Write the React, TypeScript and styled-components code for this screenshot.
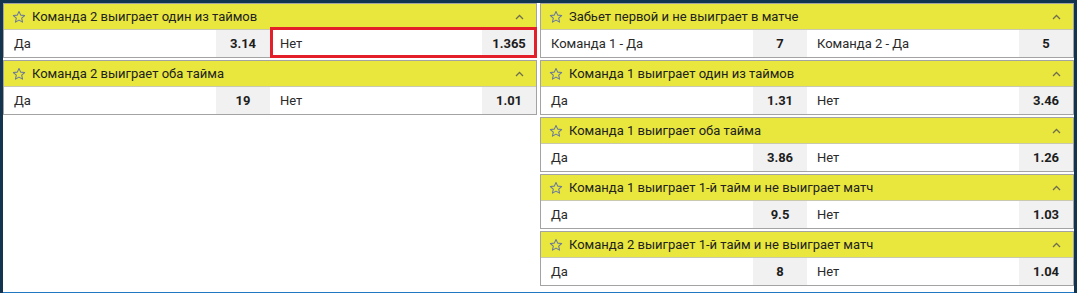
import React from "react";
import styled, { createGlobalStyle } from "styled-components";

const GlobalStyle = createGlobalStyle`
  html, body {
    margin: 0;
    padding: 0;
    background: #12344f;
    font-family: Roboto, "Noto Sans", Arial, sans-serif;
  }
  * { box-sizing: border-box; }
`;

const Frame = styled.div`
  margin: 3px 3px 0 3px;
  height: 290px;
  background: #fff;
  border-bottom: 1px solid #1f78c1;
  display: grid;
  grid-template-columns: 534px 534px;
  column-gap: 3px;
  align-items: start;
`;

const Column = styled.div`
  display: flex;
  flex-direction: column;
  gap: 2px;
`;

const Block = styled.div`
  border: 1px solid #a3a3a3;
  background: #fff;
`;

const Head = styled.div`
  height: 26px;
  background: #e9e73d;
  border-bottom: 1px solid #c9c9b0;
  display: flex;
  align-items: center;
  padding: 0 12px 0 8px;
  gap: 6px;
  font-size: 13px;
  color: #222;
`;

const Title = styled.span`
  flex: 1;
  white-space: nowrap;
`;

const Row = styled.div`
  height: 27px;
  display: grid;
  grid-template-columns: 1fr 1fr;
`;

const Outcome = styled.div<{ $selected?: boolean }>`
  position: relative;
  display: flex;
  align-items: stretch;
  font-size: 13px;
  color: #2a2a2a;
  &::after {
    content: "";
    display: ${(p) => (p.$selected ? "block" : "none")};
    position: absolute;
    left: 0;
    right: -1px;
    top: -3px;
    bottom: -1px;
    border: 3px solid #e3202a;
  }
`;

const Label = styled.span`
  flex: 1;
  display: flex;
  align-items: center;
  padding-left: 10px;
  white-space: nowrap;
`;

const Odds = styled.span`
  width: 54px;
  background: #f1f1f1;
  display: flex;
  align-items: center;
  justify-content: center;
  font-weight: 700;
  font-size: 13px;
  color: #1d1d1d;
`;

const Star = () => (
  <svg width="14" height="14" viewBox="0 0 24 24" fill="none">
    <path
      d="M12 2.5l2.9 6.3 6.8.7-5.1 4.6 1.5 6.7L12 17.4l-6.1 3.4 1.5-6.7-5.1-4.6 6.8-.7z"
      stroke="#6a789c"
      strokeWidth="1.8"
      strokeLinejoin="round"
    />
  </svg>
);

const Chevron = () => (
  <svg width="9" height="6" viewBox="0 0 9 6">
    <polyline points="1,5 4.5,1.5 8,5" fill="none" stroke="#6f6f50" strokeWidth="1.3" />
  </svg>
);

type Market = {
  title: string;
  outcomes: { name: string; odds: string; selected?: boolean }[];
};

const left: Market[] = [
  {
    title: "Команда 2 выиграет один из таймов",
    outcomes: [
      { name: "Да", odds: "3.14" },
      { name: "Нет", odds: "1.365", selected: true },
    ],
  },
  {
    title: "Команда 2 выиграет оба тайма",
    outcomes: [
      { name: "Да", odds: "19" },
      { name: "Нет", odds: "1.01" },
    ],
  },
];

const right: Market[] = [
  {
    title: "Забьет первой и не выиграет в матче",
    outcomes: [
      { name: "Команда 1 - Да", odds: "7" },
      { name: "Команда 2 - Да", odds: "5" },
    ],
  },
  {
    title: "Команда 1 выиграет один из таймов",
    outcomes: [
      { name: "Да", odds: "1.31" },
      { name: "Нет", odds: "3.46" },
    ],
  },
  {
    title: "Команда 1 выиграет оба тайма",
    outcomes: [
      { name: "Да", odds: "3.86" },
      { name: "Нет", odds: "1.26" },
    ],
  },
  {
    title: "Команда 1 выиграет 1-й тайм и не выиграет матч",
    outcomes: [
      { name: "Да", odds: "9.5" },
      { name: "Нет", odds: "1.03" },
    ],
  },
  {
    title: "Команда 2 выиграет 1-й тайм и не выиграет матч",
    outcomes: [
      { name: "Да", odds: "8" },
      { name: "Нет", odds: "1.04" },
    ],
  },
];

const MarketBlock = ({ m }: { m: Market }) => (
  <Block>
    <Head>
      <Star />
      <Title>{m.title}</Title>
      <Chevron />
    </Head>
    <Row>
      {m.outcomes.map((o) => (
        <Outcome key={o.name} $selected={o.selected}>
          <Label>{o.name}</Label>
          <Odds>{o.odds}</Odds>
        </Outcome>
      ))}
    </Row>
  </Block>
);

export default function App() {
  return (
    <>
      <GlobalStyle />
      <Frame>
        <Column>
          {left.map((m) => (
            <MarketBlock key={m.title} m={m} />
          ))}
        </Column>
        <Column>
          {right.map((m) => (
            <MarketBlock key={m.title} m={m} />
          ))}
        </Column>
      </Frame>
    </>
  );
}
